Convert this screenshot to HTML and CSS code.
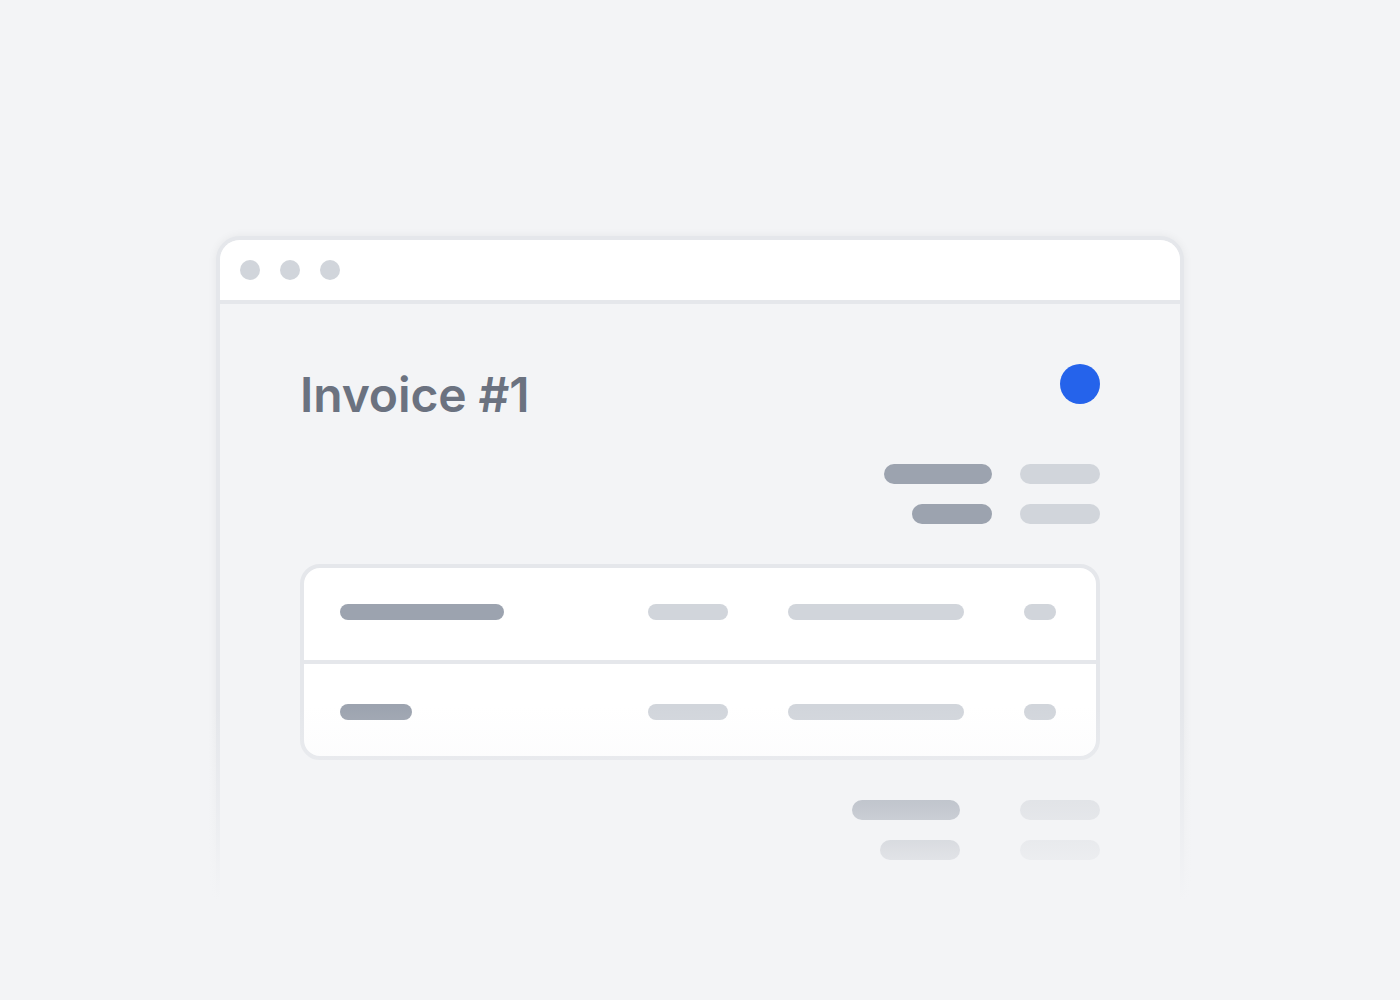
FILE: index.html
```html
<!DOCTYPE html>
<html lang="en">
<head>
<meta charset="utf-8">
<title>Invoice #1</title>
<link rel="stylesheet" href="styles.css">
</head>
<body>
<div class="stage">
  <div class="fade">
    <div class="window">
      <div class="titlebar">
        <span class="dot"></span>
        <span class="dot"></span>
        <span class="dot"></span>
      </div>
      <div class="content">
        <div class="head">
          <h1 class="title">Invoice #1</h1>
          <span class="avatar"></span>
        </div>
        <div class="meta">
          <div class="meta-row"><span class="bar dark w108"></span><span class="bar light w80"></span></div>
          <div class="meta-row"><span class="bar dark w80"></span><span class="bar light w80"></span></div>
        </div>
        <div class="table">
          <div class="trow first">
            <span class="line dark w164"></span>
            <span class="line light w80"></span>
            <span class="line light w176"></span>
            <span class="line light w32"></span>
          </div>
          <div class="trow second">
            <span class="line dark w72"></span>
            <span class="line light w80"></span>
            <span class="line light w176"></span>
            <span class="line light w32"></span>
          </div>
        </div>
        <div class="meta totals">
          <div class="meta-row"><span class="bar dark w108"></span><span class="bar pale w80"></span></div>
          <div class="meta-row"><span class="bar mid w80"></span><span class="bar pale w80"></span></div>
        </div>
      </div>
    </div>
  </div>
</div>
</body>
</html>
```

FILE: styles.css
```css
html, body {
  margin: 0;
  padding: 0;
  background: #f3f4f6;
  font-family: Inter, "Noto Sans", "Liberation Sans", sans-serif;
}

.stage {
  width: 1400px;
  height: 1000px;
  display: flex;
  justify-content: center;
  padding-top: 216px;
  box-sizing: border-box;
  overflow: hidden;
}

.fade {
  position: relative;
  padding: 20px;
}

.fade::after {
  content: "";
  position: absolute;
  left: 0;
  right: 0;
  top: 490px;
  height: 260px;
  background: linear-gradient(to bottom,
    rgba(243, 244, 246, 0) 0px,
    rgba(243, 244, 246, 0.45) 100px,
    rgba(243, 244, 246, 0.68) 140px,
    #f3f4f6 195px);
}

.window {
  width: 968px;
  height: 700px;
  box-sizing: border-box;
  border: 4px solid #e5e7eb;
  border-radius: 24px;
  background: #f3f4f6;
  box-shadow: 0 0 10px rgba(17, 24, 39, 0.06);
  overflow: hidden;
}

.titlebar {
  height: 60px;
  background: #ffffff;
  border-bottom: 4px solid #e5e7eb;
  display: flex;
  align-items: center;
  gap: 20px;
  padding-left: 20px;
}

.dot {
  width: 20px;
  height: 20px;
  border-radius: 50%;
  background: #d1d5db;
}

.content {
  padding: 60px 80px 0;
}

.head {
  display: flex;
  justify-content: space-between;
  align-items: flex-start;
  height: 40px;
}

.title {
  margin: 7px 0 0;
  font-size: 48px;
  line-height: 48px;
  font-weight: 600;
  color: #6b7280;
  letter-spacing: -0.1px;
}

.avatar {
  width: 40px;
  height: 40px;
  border-radius: 50%;
  background: #2563eb;
}

.meta {
  margin-top: 60px;
  display: flex;
  flex-direction: column;
  align-items: flex-end;
  gap: 20px;
}

.meta-row {
  display: flex;
  justify-content: flex-end;
  gap: 28px;
}

.totals .meta-row {
  gap: 60px;
}

.bar {
  height: 20px;
  border-radius: 10px;
}

.dark { background: #9ca3af; }
.mid { background: #a9aeb8; }
.light { background: #d1d5db; }
.pale { background: #d5d8dd; }

.w32 { width: 32px; }
.w72 { width: 72px; }
.w80 { width: 80px; }
.w108 { width: 108px; }
.w164 { width: 164px; }
.w176 { width: 176px; }

.table {
  margin-top: 40px;
  background: #ffffff;
  border: 4px solid #e5e7eb;
  border-radius: 20px;
}

.trow {
  display: grid;
  grid-template-columns: 1fr 80px 176px 32px;
  column-gap: 60px;
  align-items: center;
  padding: 0 40px 0 36px;
}

.trow.first {
  padding-top: 36px;
  padding-bottom: 40px;
  border-bottom: 4px solid #e5e7eb;
}

.trow.second {
  padding-top: 40px;
  padding-bottom: 36px;
}

.line {
  height: 16px;
  border-radius: 8px;
}

.totals {
  margin-top: 40px;
}
```
